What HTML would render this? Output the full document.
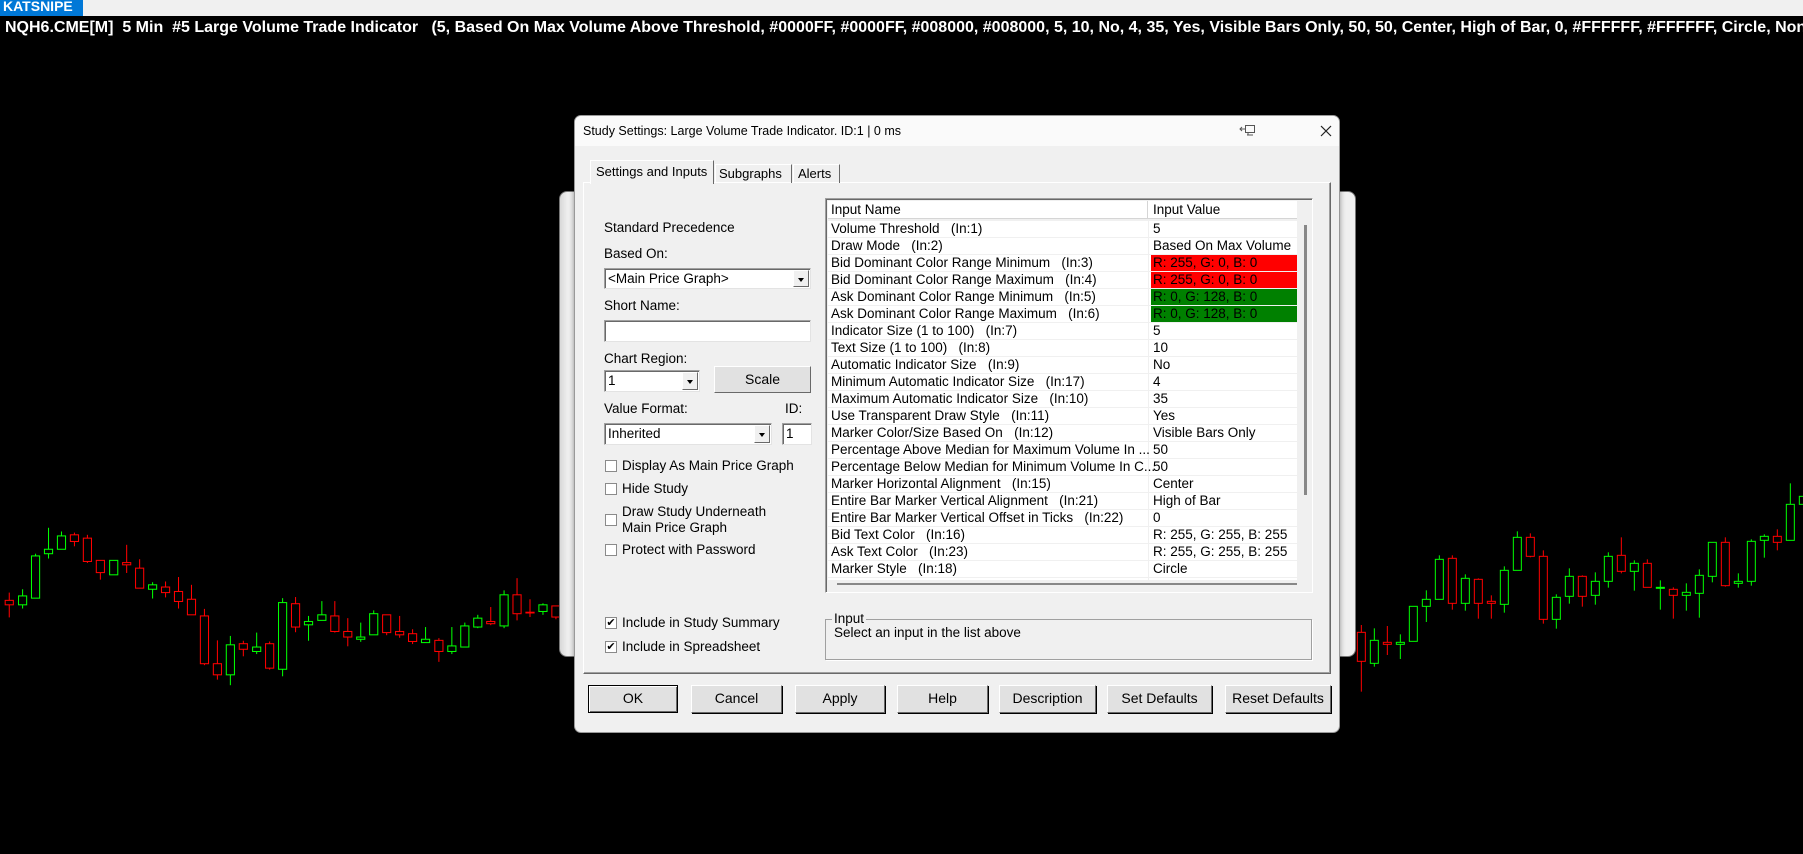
<!DOCTYPE html>
<html><head><meta charset="utf-8">
<style>
*{margin:0;padding:0;box-sizing:border-box}
body{width:1803px;height:854px;background:#000;position:relative;overflow:hidden;font-family:"Liberation Sans",Arial,sans-serif;font-size:13.5px;color:#000}
.a{position:absolute}
.t{position:absolute;white-space:nowrap;line-height:16px}
.sunk{background:#fff;border:1px solid #a0a0a0;border-right-color:#e3e3e3;border-bottom-color:#e3e3e3;box-shadow:inset 1px 1px 0 #696969}
.dd{position:absolute;top:1px;right:1px;width:16px;bottom:1px;background:#f0f0f0;border:1px solid #fff;border-right-color:#696969;border-bottom-color:#696969}
.dd:after{content:"";position:absolute;left:4px;top:7px;border:3.5px solid transparent;border-top:4px solid #000}
.btn{position:absolute;height:28px;background:#e1e1e1;border:1px solid #fff;border-right-color:#696969;border-bottom-color:#696969;box-shadow:1px 1px 0 #000;text-align:center;line-height:25px;font-size:14px}
.cb{position:absolute;width:12px;height:12px;background:#fff;border:1px solid #8a8a8a;font-size:11px;line-height:10px;text-align:center}
.row{position:absolute;left:0;height:17px;width:469px;border-bottom:1px solid #f0f0f0}
.row span{position:absolute;top:0;line-height:16px;white-space:nowrap}
.row .n{left:3px}.row .v{left:323px;width:146px;height:16px;padding-left:2px}
</style></head><body>
<div class="a" style="left:0;top:0;width:1803px;height:16px;background:#f0f0f0"></div>
<div class="a" style="left:0;top:0;width:83px;height:16px;background:#0078d7;color:#fff;font-weight:bold;font-size:14px;line-height:12px;padding-left:3px;overflow:hidden">KATSNIPE</div>
<div class="t" style="left:5px;top:19px;color:#fff;font-weight:bold;font-size:16px;line-height:18px">NQH6.CME[M]&nbsp; 5 Min&nbsp; #5 Large Volume Trade Indicator&nbsp;&nbsp; (5, Based On Max Volume Above Threshold, #0000FF, #0000FF, #008000, #008000, 5, 10, No, 4, 35, Yes, Visible Bars Only, 50, 50, Center, High of Bar, 0, #FFFFFF, #FFFFFF, Circle, None</div>

<svg class="a" style="left:0;top:0" width="1803" height="854">
<g transform="translate(0,500) scale(0.37037)" fill="#000" stroke-width="2.8">
<g stroke="#f00">
<line x1="25" x2="25" y1="250" y2="317"/><rect x="14" y="271" width="22" height="12"/>
<line x1="201" x2="201" y1="88" y2="125"/><rect x="190" y="94" width="22" height="18"/>
<line x1="236" x2="236" y1="94" y2="170"/><rect x="225" y="103" width="22" height="63"/>
<line x1="271" x2="271" y1="163" y2="215"/><rect x="260" y="163" width="22" height="33"/>
<line x1="342" x2="342" y1="121" y2="197"/><rect x="331" y="169" width="22" height="6"/>
<line x1="377" x2="377" y1="160" y2="238"/><rect x="366" y="184" width="22" height="54"/>
<line x1="447" x2="447" y1="220" y2="263"/><rect x="436" y="235" width="22" height="15"/>
<line x1="482" x2="482" y1="208" y2="293"/><rect x="471" y="247" width="22" height="27"/>
<line x1="517" x2="517" y1="229" y2="310"/><rect x="506" y="268" width="22" height="42"/>
<line x1="552" x2="552" y1="294" y2="446"/><rect x="541" y="313" width="22" height="129"/>
<line x1="587" x2="587" y1="379" y2="485"/><rect x="576" y="442" width="22" height="30"/>
<line x1="657" x2="657" y1="380" y2="422"/><rect x="646" y="388" width="22" height="15"/>
<line x1="728" x2="728" y1="382" y2="458"/><rect x="717" y="388" width="22" height="66"/>
<line x1="798" x2="798" y1="262" y2="357"/><rect x="787" y="280" width="22" height="63"/>
<line x1="904" x2="904" y1="273" y2="358"/><rect x="893" y="313" width="22" height="42"/>
<line x1="939" x2="939" y1="319" y2="395"/><rect x="928" y="355" width="22" height="15"/>
<line x1="1044" x2="1044" y1="310" y2="365"/><rect x="1033" y="310" width="22" height="48"/>
<line x1="1079" x2="1079" y1="313" y2="372"/><rect x="1068" y="355" width="22" height="9"/>
<line x1="1114" x2="1114" y1="349" y2="389"/><rect x="1103" y="361" width="22" height="21"/>
<line x1="1185" x2="1185" y1="373" y2="437"/><rect x="1174" y="379" width="22" height="30"/>
<line x1="1325" x2="1325" y1="289" y2="338"/><rect x="1314" y="328" width="22" height="6"/>
<line x1="1396" x2="1396" y1="211" y2="325"/><rect x="1385" y="256" width="22" height="51"/>
<line x1="1431" x2="1431" y1="268" y2="316"/><rect x="1420" y="303" width="22" height="2"/>
<line x1="1501" x2="1501" y1="286" y2="322"/><rect x="1490" y="286" width="22" height="30"/>
</g>
<g stroke="#0f0">
<line x1="61" x2="61" y1="241" y2="293"/><rect x="50" y="259" width="22" height="24"/>
<line x1="96" x2="96" y1="145" y2="265"/><rect x="85" y="151" width="22" height="114"/>
<line x1="131" x2="131" y1="75" y2="158"/><rect x="120" y="133" width="22" height="12"/>
<line x1="166" x2="166" y1="85" y2="133"/><rect x="155" y="97" width="22" height="36"/>
<rect x="296" y="163" width="22" height="39"/>
<line x1="412" x2="412" y1="222" y2="266"/><rect x="401" y="229" width="22" height="12"/>
<line x1="622" x2="622" y1="367" y2="500"/><rect x="611" y="391" width="22" height="81"/>
<line x1="693" x2="693" y1="358" y2="416"/><rect x="682" y="397" width="22" height="12"/>
<line x1="763" x2="763" y1="265" y2="476"/><rect x="752" y="277" width="22" height="180"/>
<line x1="833" x2="833" y1="313" y2="380"/><rect x="822" y="328" width="22" height="9"/>
<line x1="869" x2="869" y1="273" y2="325"/><rect x="858" y="310" width="22" height="15"/>
<line x1="974" x2="974" y1="331" y2="383"/><rect x="963" y="370" width="22" height="6"/>
<line x1="1009" x2="1009" y1="298" y2="364"/><rect x="998" y="307" width="22" height="57"/>
<line x1="1149" x2="1149" y1="343" y2="385"/><rect x="1138" y="376" width="22" height="9"/>
<line x1="1220" x2="1220" y1="343" y2="416"/><rect x="1209" y="394" width="22" height="15"/>
<line x1="1255" x2="1255" y1="331" y2="397"/><rect x="1244" y="340" width="22" height="57"/>
<line x1="1290" x2="1290" y1="310" y2="346"/><rect x="1279" y="319" width="22" height="24"/>
<line x1="1361" x2="1361" y1="244" y2="346"/><rect x="1350" y="256" width="22" height="84"/>
<line x1="1466" x2="1466" y1="279" y2="310"/><rect x="1455" y="283" width="22" height="18"/>
</g></g>
<g transform="translate(1340,460) scale(0.33333)" fill="#000" stroke-width="3">
<g stroke="#f00">
<line x1="64" x2="64" y1="495" y2="695"/><rect x="52" y="517" width="24" height="87"/>
<line x1="142" x2="142" y1="498" y2="585"/><rect x="130" y="547" width="24" height="6"/>
<line x1="337" x2="337" y1="286" y2="449"/><rect x="325" y="295" width="24" height="135"/>
<line x1="415" x2="415" y1="355" y2="476"/><rect x="403" y="358" width="24" height="72"/>
<line x1="454" x2="454" y1="406" y2="476"/><rect x="442" y="424" width="24" height="6"/>
<line x1="571" x2="571" y1="220" y2="292"/><rect x="559" y="232" width="24" height="57"/>
<line x1="610" x2="610" y1="271" y2="491"/><rect x="598" y="289" width="24" height="189"/>
<line x1="727" x2="727" y1="346" y2="440"/><rect x="715" y="349" width="24" height="60"/>
<line x1="844" x2="844" y1="232" y2="340"/><rect x="832" y="286" width="24" height="48"/>
<line x1="922" x2="922" y1="298" y2="382"/><rect x="910" y="310" width="24" height="72"/>
<line x1="1000" x2="1000" y1="382" y2="476"/><rect x="988" y="388" width="24" height="18"/>
<line x1="1156" x2="1156" y1="232" y2="380"/><rect x="1144" y="247" width="24" height="130"/>
<line x1="1312" x2="1312" y1="208" y2="271"/><rect x="1300" y="229" width="24" height="18"/>
</g>
<g stroke="#0f0">
<line x1="103" x2="103" y1="505" y2="620"/><rect x="91" y="541" width="24" height="69"/>
<line x1="181" x2="181" y1="523" y2="597"/><rect x="169" y="547" width="24" height="6"/>
<rect x="208" y="439" width="24" height="105"/>
<line x1="259" x2="259" y1="391" y2="486"/><rect x="247" y="418" width="24" height="21"/>
<line x1="298" x2="298" y1="286" y2="418"/><rect x="286" y="298" width="24" height="120"/>
<line x1="376" x2="376" y1="343" y2="452"/><rect x="364" y="355" width="24" height="75"/>
<line x1="493" x2="493" y1="319" y2="458"/><rect x="481" y="331" width="24" height="102"/>
<line x1="532" x2="532" y1="214" y2="331"/><rect x="520" y="232" width="24" height="99"/>
<line x1="649" x2="649" y1="403" y2="506"/><rect x="637" y="412" width="24" height="66"/>
<line x1="688" x2="688" y1="325" y2="431"/><rect x="676" y="349" width="24" height="60"/>
<line x1="766" x2="766" y1="337" y2="434"/><rect x="754" y="364" width="24" height="42"/>
<line x1="805" x2="805" y1="277" y2="383"/><rect x="793" y="289" width="24" height="75"/>
<line x1="883" x2="883" y1="301" y2="392"/><rect x="871" y="310" width="24" height="24"/>
<line x1="961" x2="961" y1="361" y2="449"/><rect x="949" y="382" width="24" height="3"/>
<line x1="1039" x2="1039" y1="370" y2="452"/><rect x="1027" y="397" width="24" height="9"/>
<line x1="1078" x2="1078" y1="328" y2="473"/><rect x="1066" y="346" width="24" height="54"/>
<line x1="1117" x2="1117" y1="247" y2="367"/><rect x="1105" y="247" width="24" height="102"/>
<line x1="1195" x2="1195" y1="340" y2="383"/><rect x="1183" y="364" width="24" height="6"/>
<line x1="1234" x2="1234" y1="238" y2="377"/><rect x="1222" y="244" width="24" height="120"/>
<line x1="1273" x2="1273" y1="223" y2="293"/><rect x="1261" y="229" width="24" height="12"/>
<line x1="1351" x2="1351" y1="70" y2="241"/><rect x="1339" y="133" width="24" height="108"/>
<rect x="1378" y="109" width="24" height="24"/>
</g></g>
</svg>

<div class="a" style="left:559px;top:191px;width:797px;height:466px;background:linear-gradient(90deg,#d8d8d8,#f0f0f0 8px);border-radius:8px;border:1px solid #777"></div>

<div class="a" style="left:574px;top:115px;width:766px;height:618px;background:#f0f0f0;border:1px solid #999;border-radius:7px;overflow:hidden;box-shadow:0 0 6px rgba(0,0,0,.4)">
 <div class="a" style="left:0;top:0;width:766px;height:30px;background:#fafafa"></div>
 <div class="t" style="left:8px;top:7px;font-size:12.5px">Study Settings: Large Volume Trade Indicator. ID:1 | 0 ms</div>
 <svg class="a" style="left:664px;top:9px" width="18" height="12"><rect x="6.5" y="0.5" width="9" height="7" fill="none" stroke="#555"/><path d="M9 8v2h4M8 10h6M1 4h5M3 2l-2 2 2 2" fill="none" stroke="#555"/></svg>
 <svg class="a" style="left:745px;top:9px" width="12" height="12"><path d="M1 1l10 10M11 1L1 11" stroke="#222" stroke-width="1.2"/></svg>
</div>
<div class="a" style="left:583px;top:182px;width:748px;height:492px;border:1px solid #fff;border-right-color:#696969;border-bottom-color:#696969;box-shadow:inset -1px -1px 0 #a0a0a0"></div>
<div class="a" style="left:590px;top:160px;width:124px;height:24px;background:#f0f0f0;border:1px solid #fff;border-right:1px solid #696969;border-bottom:none"></div>
<div class="t" style="left:596px;top:164px;font-size:13px">Settings and Inputs</div>
<div class="a" style="left:715px;top:164px;width:77px;height:19px;border:1px solid #fff;border-right:1px solid #696969;border-bottom:none"></div>
<div class="t" style="left:719px;top:166px;font-size:13px">Subgraphs</div>
<div class="a" style="left:793px;top:164px;width:47px;height:19px;border:1px solid #fff;border-right:1px solid #696969;border-bottom:none"></div>
<div class="t" style="left:798px;top:166px;font-size:13px">Alerts</div>

<div class="t" style="left:604px;top:220px">Standard Precedence</div>
<div class="t" style="left:604px;top:246px">Based On:</div>
<div class="a sunk" style="left:604px;top:268px;width:207px;height:21px"><div class="t" style="left:3px;top:2px">&lt;Main Price Graph&gt;</div><div class="dd"></div></div>
<div class="t" style="left:604px;top:298px">Short Name:</div>
<div class="a sunk" style="left:604px;top:320px;width:207px;height:22px"></div>
<div class="t" style="left:604px;top:351px">Chart Region:</div>
<div class="a sunk" style="left:604px;top:370px;width:96px;height:22px"><div class="t" style="left:3px;top:2px">1</div><div class="dd"></div></div>
<div class="btn" style="left:714px;top:366px;width:97px;height:27px;box-shadow:none">Scale</div>
<div class="t" style="left:604px;top:401px">Value Format:</div>
<div class="t" style="left:785px;top:401px">ID:</div>
<div class="a sunk" style="left:604px;top:423px;width:168px;height:22px"><div class="t" style="left:3px;top:2px">Inherited</div><div class="dd"></div></div>
<div class="a sunk" style="left:782px;top:423px;width:30px;height:22px"><div class="t" style="left:3px;top:2px">1</div></div>
<div class="cb" style="left:605px;top:460px"></div><div class="t" style="left:622px;top:458px">Display As Main Price Graph</div>
<div class="cb" style="left:605px;top:483px"></div><div class="t" style="left:622px;top:481px">Hide Study</div>
<div class="cb" style="left:605px;top:514px"></div><div class="t" style="left:622px;top:504px">Draw Study Underneath</div><div class="t" style="left:622px;top:520px">Main Price Graph</div>
<div class="cb" style="left:605px;top:544px"></div><div class="t" style="left:622px;top:542px">Protect with Password</div>
<div class="cb" style="left:605px;top:617px">✔</div><div class="t" style="left:622px;top:615px">Include in Study Summary</div>
<div class="cb" style="left:605px;top:641px">✔</div><div class="t" style="left:622px;top:639px">Include in Spreadsheet</div>

<div class="a" style="left:825px;top:198px;width:488px;height:395px;background:#f0f0f0;border:1px solid #a0a0a0;border-right-color:#fff;border-bottom-color:#fff;box-shadow:inset 1px 1px 0 #696969">
 <div class="a" style="left:2px;top:2px;width:469px;height:18px;background:#fff;border-bottom:1px solid #d5d5d5"></div>
 <div class="a" style="left:321px;top:2px;width:2px;height:18px;border-left:1px solid #d5d5d5"></div>
 <div class="t" style="left:5px;top:3px">Input Name</div>
 <div class="t" style="left:327px;top:3px">Input Value</div>
 <div class="a" style="left:478px;top:26px;width:3px;height:270px;background:#888"></div>
 <div class="a" style="left:11px;top:384px;width:460px;height:2px;background:#888"></div>
 <div class="a" style="left:2px;top:22px;width:469px;height:359px;background:#fff">
  <div class="a" style="left:320px;top:0;width:1px;height:359px;background:#f0f0f0"></div>
  <div class="row" style="top:0"><span class="n">Volume Threshold&nbsp;&nbsp; (In:1)</span><span class="v">5</span></div>
  <div class="row" style="top:17px"><span class="n">Draw Mode&nbsp;&nbsp; (In:2)</span><span class="v">Based On Max Volume</span></div>
  <div class="row" style="top:34px"><span class="n">Bid Dominant Color Range Minimum&nbsp;&nbsp; (In:3)</span><span class="v" style="background:#f00">R: 255, G: 0, B: 0</span></div>
  <div class="row" style="top:51px"><span class="n">Bid Dominant Color Range Maximum&nbsp;&nbsp; (In:4)</span><span class="v" style="background:#f00">R: 255, G: 0, B: 0</span></div>
  <div class="row" style="top:68px"><span class="n">Ask Dominant Color Range Minimum&nbsp;&nbsp; (In:5)</span><span class="v" style="background:#008000">R: 0, G: 128, B: 0</span></div>
  <div class="row" style="top:85px"><span class="n">Ask Dominant Color Range Maximum&nbsp;&nbsp; (In:6)</span><span class="v" style="background:#008000">R: 0, G: 128, B: 0</span></div>
  <div class="row" style="top:102px"><span class="n">Indicator Size (1 to 100)&nbsp;&nbsp; (In:7)</span><span class="v">5</span></div>
  <div class="row" style="top:119px"><span class="n">Text Size (1 to 100)&nbsp;&nbsp; (In:8)</span><span class="v">10</span></div>
  <div class="row" style="top:136px"><span class="n">Automatic Indicator Size&nbsp;&nbsp; (In:9)</span><span class="v">No</span></div>
  <div class="row" style="top:153px"><span class="n">Minimum Automatic Indicator Size&nbsp;&nbsp; (In:17)</span><span class="v">4</span></div>
  <div class="row" style="top:170px"><span class="n">Maximum Automatic Indicator Size&nbsp;&nbsp; (In:10)</span><span class="v">35</span></div>
  <div class="row" style="top:187px"><span class="n">Use Transparent Draw Style&nbsp;&nbsp; (In:11)</span><span class="v">Yes</span></div>
  <div class="row" style="top:204px"><span class="n">Marker Color/Size Based On&nbsp;&nbsp; (In:12)</span><span class="v">Visible Bars Only</span></div>
  <div class="row" style="top:221px"><span class="n">Percentage Above Median for Maximum Volume In ...</span><span class="v">50</span></div>
  <div class="row" style="top:238px"><span class="n">Percentage Below Median for Minimum Volume In C...</span><span class="v">50</span></div>
  <div class="row" style="top:255px"><span class="n">Marker Horizontal Alignment&nbsp;&nbsp; (In:15)</span><span class="v">Center</span></div>
  <div class="row" style="top:272px"><span class="n">Entire Bar Marker Vertical Alignment&nbsp;&nbsp; (In:21)</span><span class="v">High of Bar</span></div>
  <div class="row" style="top:289px"><span class="n">Entire Bar Marker Vertical Offset in Ticks&nbsp;&nbsp; (In:22)</span><span class="v">0</span></div>
  <div class="row" style="top:306px"><span class="n">Bid Text Color&nbsp;&nbsp; (In:16)</span><span class="v">R: 255, G: 255, B: 255</span></div>
  <div class="row" style="top:323px"><span class="n">Ask Text Color&nbsp;&nbsp; (In:23)</span><span class="v">R: 255, G: 255, B: 255</span></div>
  <div class="row" style="top:340px"><span class="n">Marker Style&nbsp;&nbsp; (In:18)</span><span class="v">Circle</span></div>
 </div>
</div>

<div class="a" style="left:825px;top:619px;width:487px;height:41px;border:1px solid #a0a0a0;box-shadow:1px 1px 0 #fff"></div>
<div class="t" style="left:832px;top:611px;background:#f0f0f0;padding:0 2px">Input</div>
<div class="t" style="left:834px;top:625px">Select an input in the list above</div>

<div class="btn" style="left:588px;top:685px;width:90px;border:1px solid #000;box-shadow:inset 1px 1px 0 #fff,inset -1px -1px 0 #696969">OK</div>
<div class="btn" style="left:691px;top:685px;width:91px">Cancel</div>
<div class="btn" style="left:795px;top:685px;width:90px">Apply</div>
<div class="btn" style="left:897px;top:685px;width:91px">Help</div>
<div class="btn" style="left:999px;top:685px;width:97px">Description</div>
<div class="btn" style="left:1107px;top:685px;width:105px">Set Defaults</div>
<div class="btn" style="left:1225px;top:685px;width:106px">Reset Defaults</div>
</body></html>
